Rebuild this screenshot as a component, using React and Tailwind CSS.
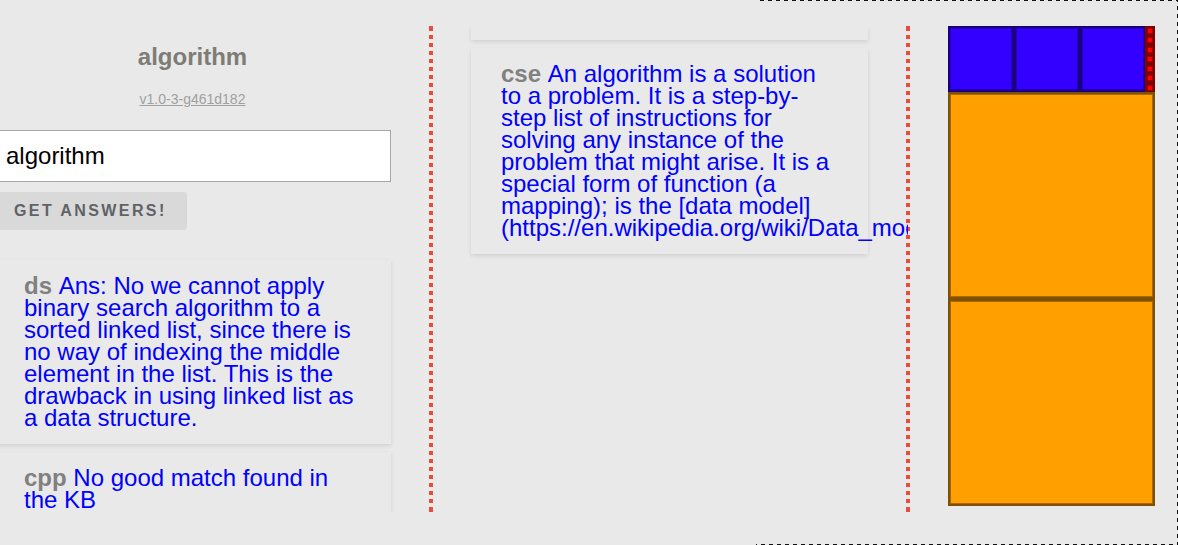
const KEYWORD = "algorithm";

const blues = [0, 66, 132];
const reds = [0, 1, 2, 3, 4, 5, 6];
const oranges = [66, 273];

function Answer({ source, children }) {
  return (
    <article className="px-[30px] py-[15px] text-2xl leading-[22px] text-[#0000ff] shadow-[0_2px_4px_rgba(0,0,0,0.1)]">
      <b className="text-[#808080]">{source} </b>
      {children}
    </article>
  );
}

function Rule() {
  return (
    <div className="w-1 shrink-0 border-y border-[#e74c3c] bg-[repeating-linear-gradient(to_bottom,#e74c3c_0_4px,transparent_4px_8px)]" />
  );
}

function Tile({ x, y, size, fill, edge, line }) {
  return (
    <>
      <rect x={x} y={y} width={size} height={size} fill={line} />
      <rect x={x + 2} y={y + 2} width={size - 4} height={size - 4} fill={edge} />
      <rect x={x + 3} y={y + 3} width={size - 6} height={size - 6} fill={fill} />
    </>
  );
}

function SquaresDrawing() {
  return (
    <svg viewBox="0 0 207 480" className="block h-auto w-full" role="img" aria-label="Squares">
      {blues.map((x) => (
        <Tile key={x} x={x} y={0} size={66} fill="#3300ff" edge="#2600bf" line="#1a0080" />
      ))}
      <rect x="197" y="0" width="10" height="66" fill="#800000" />
      {reds.map((i) => {
        const y = Math.round((i * 66) / 7);
        return (
          <g key={i}>
            <rect x="199" y={y + 2} width="6" height="6" fill="#a00000" />
            <rect x="200" y={y + 3} width="4" height="4" fill="#ff0000" />
          </g>
        );
      })}
      {oranges.map((y) => (
        <Tile key={y} x={0} y={y} size={207} fill="#ffa000" edge="#a86900" line="#805000" />
      ))}
    </svg>
  );
}

export default function App() {
  return (
    <main className="relative h-screen overflow-hidden bg-[#e9e9e9] pt-[26px] pb-[33px] font-['Liberation_Sans',Arial,sans-serif]">
      <div className="-ml-[6px] grid h-full grid-cols-[439fr_477fr_268fr]">
        <section className="flex min-h-0 min-w-0">
          <div className="min-w-0 flex-1 overflow-hidden pt-4 pr-[38px]">
            <h1 className="text-center text-2xl leading-[30px] font-bold text-[#7d7d75]">{KEYWORD}</h1>
            <p className="mt-[17px] text-center text-sm leading-5 text-[#a0a0a0]">
              <a href="#version" className="underline">v1.0-3-g461d182</a>
            </p>
            <form className="mt-[21px]" onSubmit={(e) => e.preventDefault()}>
              <input
                aria-label="Question"
                defaultValue={KEYWORD}
                className="block h-[52px] w-full border border-[#a5a5a5] bg-white px-[11px] text-2xl text-black outline-none"
              />
              <button
                type="submit"
                className="mt-[10px] block h-[38px] rounded-[3px] bg-[#d9d9d9] px-5 text-base font-bold tracking-[0.15em] text-[#5f6368]"
              >
                GET ANSWERS!
              </button>
            </form>
            <div className="mt-[30px] flex flex-col gap-2">
              <Answer source="ds">
                Ans: No we cannot apply binary search algorithm to a sorted linked list, since there is no way of
                indexing the middle element in the list. This is the drawback in using linked list as a data structure.
              </Answer>
              <Answer source="cpp">No good match found in the KB</Answer>
            </div>
          </div>
          <Rule />
        </section>

        <section className="flex min-h-0 min-w-0">
          <div className="relative z-10 -ml-[2px] -mr-[2px] flex min-w-0 flex-1 flex-col gap-2 overflow-hidden px-10">
            <div className="h-[14px] shrink-0 shadow-[0_2px_4px_rgba(0,0,0,0.1)]" />
            <Answer source="cse">
              An algorithm is a solution to a problem. It is a step-by-step list of instructions for solving any
              instance of the problem that might arise. It is a special form of function (a mapping); is the [data
              model](https://en.wikipedia.org/wiki/Data_model)
            </Answer>
          </div>
          <Rule />
        </section>

        <section className="min-w-0 pr-[23px] pl-[38px]">
          <SquaresDrawing />
        </section>
      </div>

      <div className="pointer-events-none absolute inset-y-0 right-0 flex w-[422px] flex-col">
        <div className="ml-1 h-px bg-[repeating-linear-gradient(to_right,#111_0_4px,transparent_4px_8px)]" />
        <div className="-mt-px -mb-px w-px flex-1 self-end bg-[repeating-linear-gradient(to_bottom,#111_0_2px,transparent_2px_6px,#111_6px_8px)]" />
        <div className="h-px bg-[repeating-linear-gradient(to_right,#111_0_1px,transparent_1px_5px,#111_5px_8px)]" />
      </div>
    </main>
  );
}
